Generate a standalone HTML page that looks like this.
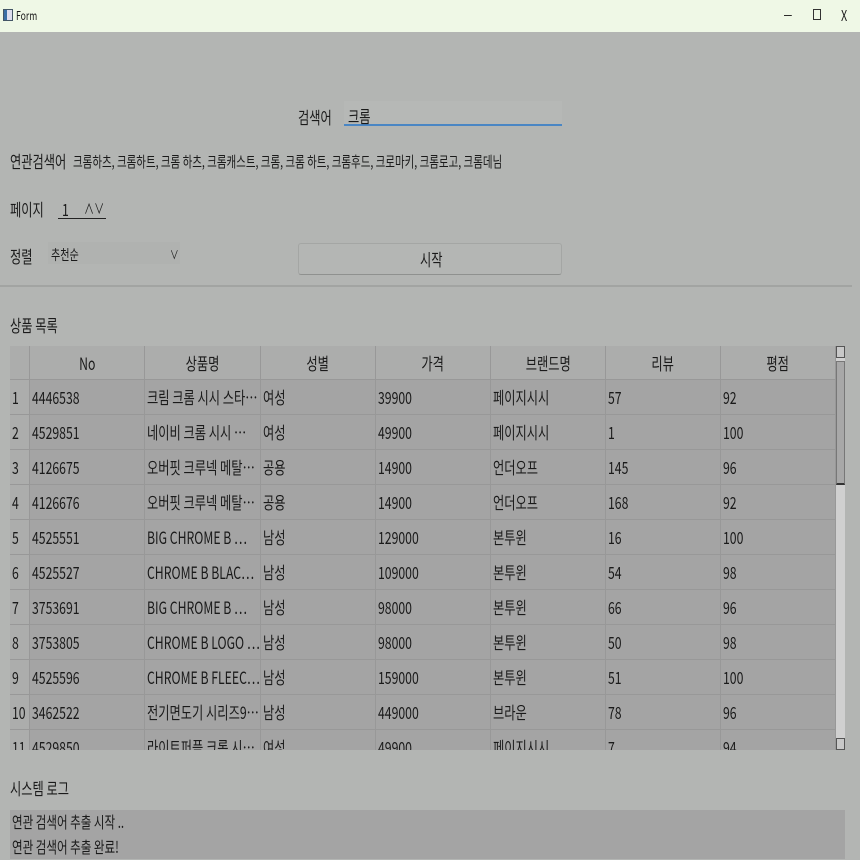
<!DOCTYPE html>
<html><head><meta charset="utf-8"><style>
*{margin:0;padding:0;box-sizing:border-box}
body{width:860px;height:859px;overflow:hidden;background:#b3b5b3;font-family:"Liberation Sans","Noto Sans CJK KR",sans-serif;color:#1a1a1a;position:relative}
.a{position:absolute;white-space:nowrap}
.t{display:inline-block;transform:scaleX(.72);transform-origin:left center;font-family:"Noto Sans CJK KR",sans-serif}
#tb{left:0;top:0;width:860px;height:32px;background:#eff8e6}
.cell{position:absolute;height:35px;border-right:1px solid #989898;border-bottom:1px solid #989898;font-size:17px;line-height:34px;padding-left:2px;overflow:hidden;white-space:nowrap}
.hd{background:#acadac;text-align:center;padding:0}
</style></head><body>
<div id="tb" class="a"></div>
<div class="a" style="left:3px;top:9px;width:10px;height:12px;border:1px solid #456;background:linear-gradient(90deg,#3a6ea5 40%,#dde 40%)"></div>
<div class="a" style="left:16px;top:7px;font-size:12px"><span class="t">Form</span></div>
<div class="a" style="left:784px;top:6px;font-size:14px">–</div>
<div class="a" style="left:813px;top:9px;width:8px;height:11px;border:1px solid #333"></div>
<div class="a" style="left:841px;top:5px;font-size:15px"><span class="t">X</span></div>

<div class="a" style="left:298px;top:104px;font-size:17px"><span class="t">검색어</span></div>
<div class="a" style="left:344px;top:101px;width:218px;height:25px;background:#b6b8b6;border-bottom:2px solid #4a86c4"></div>
<div class="a" style="left:348px;top:103px;font-size:17px"><span class="t">크롬</span></div>

<div class="a" style="left:10px;top:148px;font-size:17px"><span class="t">연관검색어</span></div>
<div class="a" style="left:73px;top:151px;font-size:14.6px"><span class="t">크롬하츠, 크롬하트, 크롬 하츠, 크롬캐스트, 크롬, 크롬 하트, 크롬후드, 크로마키, 크롬로고, 크롬데님</span></div>

<div class="a" style="left:10px;top:196px;font-size:17px"><span class="t">페이지</span></div>
<div class="a" style="left:58px;top:197px;width:48px;height:22px;border-bottom:1px solid #222"></div>
<div class="a" style="left:62px;top:196px;font-size:17px"><span class="t">1</span></div>
<div class="a" style="left:84px;top:199px;font-size:14px"><span class="t">∧∨</span></div>

<div class="a" style="left:10px;top:243px;font-size:17px"><span class="t">정렬</span></div>
<div class="a" style="left:48px;top:242px;width:132px;height:22px;background:#b0b2b0"></div>
<div class="a" style="left:51px;top:245px;font-size:14px"><span class="t">추천순</span></div>
<div class="a" style="left:170px;top:246px;font-size:12px"><span class="t">∨</span></div>

<div class="a" style="left:298px;top:243px;width:264px;height:32px;background:#b4b6b4;border:1px solid #a4a6a4;border-bottom:1px solid #8f918f;border-radius:3px"></div>
<div class="a" style="left:420px;top:246px;font-size:17px"><span class="t">시작</span></div>
<div class="a" style="left:0;top:285px;width:852px;height:2px;background:#a2a4a2"></div>

<div class="a" style="left:10px;top:312px;font-size:17px"><span class="t">상품 목록</span></div>

<div class="a" style="left:10px;top:346px;width:826px;height:404px;background:#a4a4a4;overflow:hidden" id="tbl"></div>
<div class="a" style="left:836px;top:346px;width:9px;height:404px;background:#d0d0d0"></div>
<div class="a" style="left:836px;top:346px;width:9px;height:12px;background:#c8c8c8;border:1px solid #555"></div>
<div class="a" style="left:836px;top:361px;width:9px;height:124px;background:#a8a8a8;border:1px solid #777;border-bottom:2px solid #333"></div>
<div class="a" style="left:836px;top:738px;width:9px;height:12px;background:#c8c8c8;border:1px solid #555"></div>

<div class="a" style="left:10px;top:775px;font-size:17px"><span class="t">시스템 로그</span></div>
<div class="a" style="left:10px;top:810px;width:835px;height:49px;background:#a4a4a4"></div>
<div class="a" style="left:12px;top:810px;font-size:16px;line-height:23px"><span class="t">연관 검색어 추출 시작 ..</span><br><span class="t">연관 검색어 추출 완료!</span></div>

<script>
var cols=[0,20,135,251,366,481,596,711,826];
var hd=["","No","상품명","성별","가격","브랜드명","리뷰","평점"];
var rows=[
["1","4446538","크림 크롬 시시 스타…","여성","39900","페이지시시","57","92"],
["2","4529851","네이비 크롬 시시 …","여성","49900","페이지시시","1","100"],
["3","4126675","오버핏 크루넥 메탈…","공용","14900","언더오프","145","96"],
["4","4126676","오버핏 크루넥 메탈…","공용","14900","언더오프","168","92"],
["5","4525551","BIG CHROME B …","남성","129000","본투윈","16","100"],
["6","4525527","CHROME B BLAC…","남성","109000","본투윈","54","98"],
["7","3753691","BIG CHROME B …","남성","98000","본투윈","66","96"],
["8","3753805","CHROME B LOGO …","남성","98000","본투윈","50","98"],
["9","4525596","CHROME B FLEEC…","남성","159000","본투윈","51","100"],
["10","3462522","전기면도기 시리즈9…","남성","449000","브라운","78","96"],
["11","4529850","라이트퍼플 크롭 시…","여성","49900","페이지시시","7","94"]];
var h="",t=document.getElementById("tbl");
for(var c=0;c<8;c++){h+='<div class="cell hd" style="left:'+cols[c]+'px;top:0;width:'+(cols[c+1]-cols[c])+'px;height:34px"><span class="t" style="transform-origin:center">'+hd[c]+'</span></div>';}
for(var r=0;r<rows.length;r++){for(var c=0;c<8;c++){var bg=c==0?"#acadac":"#a4a4a4";h+='<div class="cell" style="background:'+bg+';left:'+cols[c]+'px;top:'+(34+r*35)+'px;width:'+(cols[c+1]-cols[c])+'px"><span class="t">'+rows[r][c]+'</span></div>';}}
t.innerHTML=h;
</script>
</body></html>
